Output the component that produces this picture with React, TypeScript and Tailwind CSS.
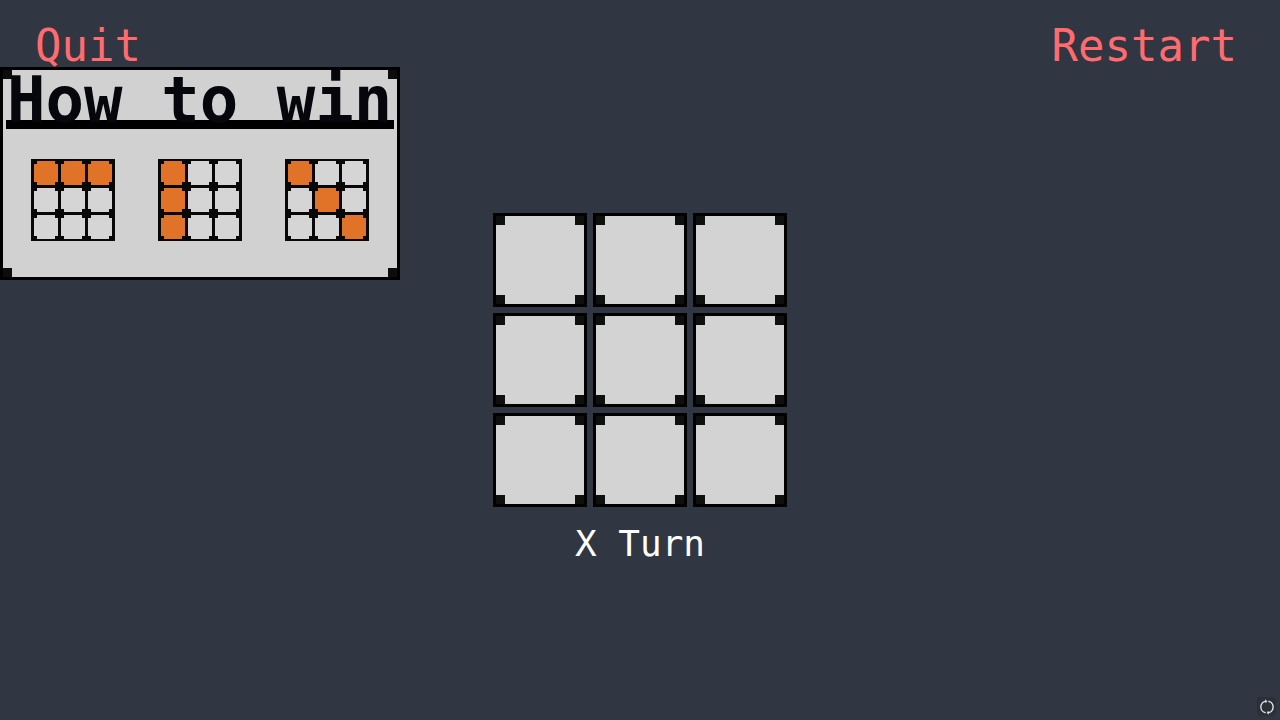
type CellProps = { filled?: boolean };

const winningBoards = [
  { name: "Complete a row", cells: [0, 1, 2] },
  { name: "Complete a column", cells: [0, 3, 6] },
  { name: "Complete a diagonal", cells: [0, 4, 8] },
];

const squares = [0, 1, 2, 3, 4, 5, 6, 7, 8];

function Corners({ size }: { size: string }) {
  return (
    <>
      <span className={`absolute top-0 left-0 ${size}`} />
      <span className={`absolute top-0 right-0 ${size}`} />
      <span className={`absolute bottom-0 left-0 ${size}`} />
      <span className={`absolute right-0 bottom-0 ${size}`} />
    </>
  );
}

function MiniCell({ filled }: CellProps) {
  return (
    <div className={`relative size-6 ${filled ? "bg-[#e07327]" : "bg-[#d5d5d5]"}`}>
      <Corners size="size-[3px] bg-[#080808]" />
    </div>
  );
}

function HowToWin() {
  return (
    <section className="relative w-[400px] border-[3px] border-black bg-[#d1d1d1]">
      <Corners size="size-[9px] bg-[#0c0d0c]" />
      <h1 className="relative mx-[3px] h-[59px] border-b-[9px] border-black pl-px text-[64px] leading-[61px] font-bold whitespace-pre text-[#05070c]">
        How to win
      </h1>
      <div className="flex gap-[43px] pt-[30px] pb-9 pl-7">
        {winningBoards.map((board) => (
          <div
            key={board.name}
            className="grid grid-cols-[repeat(3,24px)] gap-[3px] bg-[#080808] px-[3px] py-[2px]"
          >
            {squares.map((i) => (
              <MiniCell key={i} filled={board.cells.includes(i)} />
            ))}
          </div>
        ))}
      </div>
    </section>
  );
}

export default function App() {
  return (
    <main className="grid min-h-screen grid-cols-[1fr_auto_1fr] bg-[#303642] font-['DejaVu_Sans_Mono',monospace]">
      <div className="flex flex-col items-start">
        <button className="h-[67px] pt-[25px] pl-[35px] text-[44px] leading-[42px] text-[#ff6b6e]">
          Quit
        </button>
        <HowToWin />
      </div>

      <div className="grid grid-rows-[1fr_auto_1fr] justify-items-center">
        <div />
        <div className="grid grid-cols-3 gap-[6px]">
          {squares.map((i) => (
            <button
              key={i}
              aria-label={`Square ${i + 1}`}
              className="relative size-[94px] border-[3px] border-black bg-[#d3d3d3]"
            >
              <Corners size="size-[9px] bg-[#0e100e]" />
            </button>
          ))}
        </div>
        <p className="pt-4 text-[36px] leading-[42px] text-white">X Turn</p>
      </div>

      <div className="flex flex-col items-end justify-between">
        <button className="h-[67px] pt-[25px] pr-[43px] text-[44px] leading-[42px] text-[#ff6b6e]">
          Restart
        </button>
        <button
          aria-label="Refresh"
          className="mr-1 mb-1 flex size-[19px] items-center justify-center rounded-sm bg-[#2b2f37]"
        >
          <svg viewBox="0 0 16 16" className="size-4" fill="none" stroke="#e0e0e0" strokeWidth="1.4">
            <path d="M6.6 13.7A5.8 5.8 0 0 1 7.4 2.2M9.4 2.3A5.8 5.8 0 0 1 8.6 13.8" />
            <path d="M6 .8L7.8 2.2L6.8 3.8M10 15.2L8.2 13.8L9.2 12.2" strokeWidth="1" />
          </svg>
        </button>
      </div>
    </main>
  );
}
